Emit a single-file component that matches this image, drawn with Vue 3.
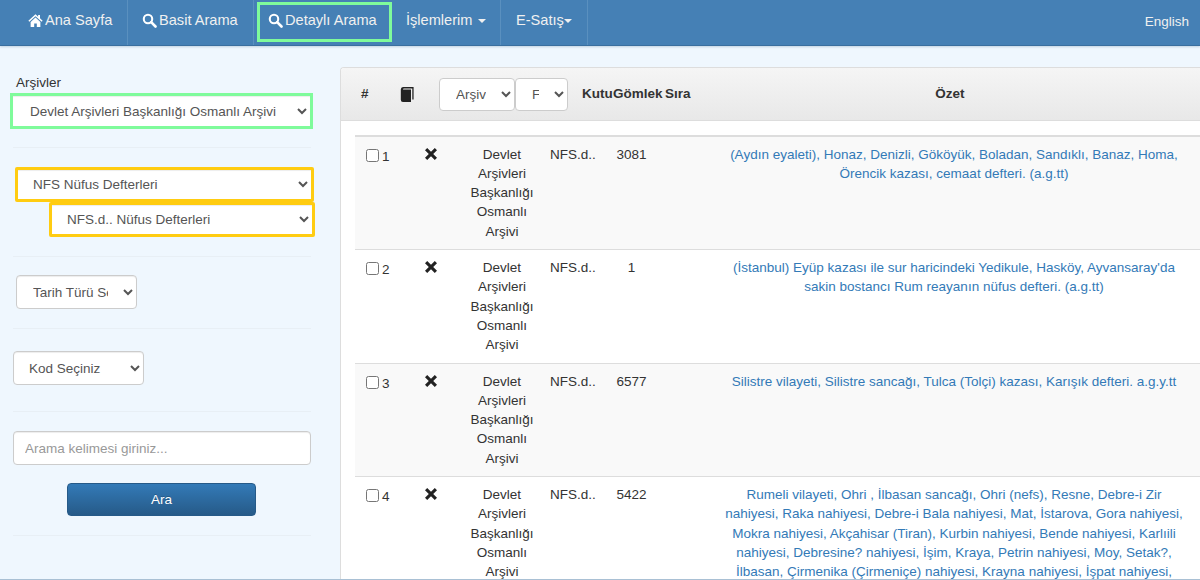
<script setup>
const navItems = [
  { label: 'Ana Sayfa', icon: 'home', cls: 'navHome' },
  { label: 'Basit Arama', icon: 'search', cls: 'navBasit' },
  { label: 'Detaylı Arama', icon: 'search', cls: 'navDetay' },
  { label: 'İşlemlerim', caret: true, cls: 'navIslem' },
  { label: 'E-Satış', caret: true, cls: 'navSatis' },
]

const arsiv = ['Devlet', 'Arşivleri', 'Başkanlığı', 'Osmanlı', 'Arşivi']

const rows = [
  {
    no: 1,
    kutu: '3081',
    ozet: '(Aydın eyaleti), Honaz, Denizli, Gököyük, Boladan, Sandıklı, Banaz, Homa, Örencik kazası, cemaat defteri. (a.g.tt)',
  },
  {
    no: 2,
    kutu: '1',
    ozet: "(İstanbul) Eyüp kazası ile sur haricindeki Yedikule, Hasköy, Ayvansaray'da sakin bostancı Rum reayanın nüfus defteri. (a.g.tt)",
  },
  {
    no: 3,
    kutu: '6577',
    ozet: 'Silistre vilayeti, Silistre sancağı, Tulca (Tolçi) kazası, Karışık defteri. a.g.y.tt',
  },
  {
    no: 4,
    kutu: '5422',
    ozet: 'Rumeli vilayeti, Ohri , İlbasan sancağı, Ohri (nefs), Resne, Debre-i Zir nahiyesi, Raka nahiyesi, Debre-i Bala nahiyesi, Mat, İstarova, Gora nahiyesi, Mokra nahiyesi, Akçahisar (Tiran), Kurbin nahiyesi, Bende nahiyesi, Karlıili nahiyesi, Debresine? nahiyesi, İşim, Kraya, Petrin nahiyesi, Moy, Setak?, İlbasan, Çirmenika (Çirmeniçe) nahiyesi, Krayna nahiyesi, İşpat nahiyesi,',
  },
]
</script>

<template>
  <div class="page">
    <nav class="navbar">
      <a v-for="item in navItems" :key="item.label" class="navItem" :class="item.cls">
        <svg v-if="item.icon === 'home'" class="navIcon" viewBox="0 0 16 16">
          <path d="M8 1.2 .4 8.2l1 1.1L8 3.4l6.6 5.9 1-1.1-2.8-2.6V2h-2v1.9L8 1.2zM2.8 9.6V15h3.8v-3.8h2.8V15h3.8V9.6L8 4.9 2.8 9.6z" fill="#fff" />
        </svg>
        <svg v-if="item.icon === 'search'" class="navIcon" viewBox="0 0 16 16">
          <circle cx="6.4" cy="6.4" r="4.5" fill="none" stroke="#fff" stroke-width="2.2" />
          <path d="M9.8 9.8 14.4 14.4" stroke="#fff" stroke-width="2.8" stroke-linecap="round" />
        </svg>
        <span>{{ item.label }}</span>
        <i v-if="item.caret" class="caret"></i>
      </a>
      <a class="english">English</a>
    </nav>

    <div class="main">
      <aside class="sidebar">
        <label class="arsivLabel">Arşivler</label>
        <select class="field green">
          <option>Devlet Arşivleri Başkanlığı Osmanlı Arşivi</option>
        </select>
        <hr class="rule ruleFirst" />
        <select class="field orange fonSelect">
          <option>NFS Nüfus Defterleri</option>
        </select>
        <select class="field orange subSelect">
          <option>NFS.d.. Nüfus Defterleri</option>
        </select>
        <hr class="rule ruleSecond" />
        <select class="field tarihSelect">
          <option>Tarih Türü Seçiniz</option>
        </select>
        <hr class="rule ruleThird" />
        <select class="field kodSelect">
          <option>Kod Seçiniz</option>
        </select>
        <hr class="rule ruleFourth" />
        <input class="field searchInput" placeholder="Arama kelimesi giriniz..." />
        <button class="araButton">Ara</button>
        <hr class="rule ruleLast" />
      </aside>

      <section class="panel">
        <header class="tableHead">
          <b class="hHash">#</b>
          <svg class="bookIcon" viewBox="0 0 14 15">
            <path d="M3 0H13.6v12.4h-1.3V1.4H3.6L2.8 2.4H11V15H3a2.2 2.2 0 0 1-2.2-2.2V2.4A2.4 2.4 0 0 1 3 0z" fill="#222" />
          </svg>
          <select class="headSelect arsivSelect"><option>Arşiv</option></select>
          <select class="headSelect fSelect"><option>F</option></select>
          <b class="hKutu">Kutu</b>
          <b class="hGomlek">Gömlek</b>
          <b class="hSira">Sıra</b>
          <b class="hOzet">Özet</b>
        </header>

        <div class="rows">
          <div v-for="row in rows" :key="row.no" class="row">
            <div class="cellNo">
              <input type="checkbox" class="check" />
              <span class="rowNo">{{ row.no }}</span>
            </div>
            <div class="cellIcon">
              <svg class="removeIcon" viewBox="0 0 14 14">
                <path d="M3.2 1 7 4.8 10.8 1 13 3.2 9.2 7l3.8 3.8-2.2 2.2L7 9.2 3.2 13 1 10.8 4.8 7 1 3.2z" fill="#222" />
              </svg>
            </div>
            <div class="cellArsiv">
              <div v-for="word in arsiv" :key="word">{{ word }}</div>
            </div>
            <div class="cellKod">NFS.d..</div>
            <div class="cellKutu">{{ row.kutu }}</div>
            <div></div>
            <a class="cellOzet">{{ row.ozet }}</a>
          </div>
        </div>
      </section>
    </div>
  </div>
</template>

<style>
html,
body {
  margin: 0;
  overflow: hidden;
}
</style>

<style scoped>
.page {
  width: 1200px;
  height: 580px;
  display: flex;
  flex-direction: column;
  overflow: hidden;
  box-sizing: border-box;
  border-bottom: 1px solid #a9c0d4;
  background: #eff7fe;
  font-family: "Liberation Sans", Arial, sans-serif;
  font-size: 13.5px;
  line-height: 19.3px;
  color: #333;
}

/* navbar */
.navbar {
  flex: none;
  height: 46px;
  box-sizing: border-box;
  display: flex;
  align-items: stretch;
  padding-left: 15px;
  background: #4580b5;
  border-bottom: 1px solid #3a6f9f;
  box-shadow: 0 1px 2px rgba(60, 100, 140, 0.25);
  color: #f0f0f0;
  font-size: 14.6px;
}

.navItem {
  display: flex;
  align-items: center;
  box-sizing: border-box;
  padding-bottom: 4px;
  border-right: 1px solid #5a90bf;
}

.navHome {
  width: 113px;
  padding-left: 13px;
}

.navBasit {
  width: 126px;
  padding-left: 14px;
}

.navDetay {
  width: 135px;
  height: 40px;
  margin: 2px 0 0 3px;
  padding-left: 8px;
  padding-bottom: 3px;
  border: 3px solid #7ffb9b;
}

.navIslem {
  width: 109px;
  padding-left: 14px;
}

.navSatis {
  width: 87px;
  padding-left: 15px;
}

.navIcon {
  width: 15px;
  height: 15px;
  margin-right: 2px;
}

.caret {
  width: 0;
  height: 0;
  margin-left: 6px;
  border-top: 4px solid #f0f0f0;
  border-left: 4px solid transparent;
  border-right: 4px solid transparent;
}

.navSatis .caret {
  margin-left: 0;
}

.english {
  margin-left: auto;
  padding: 12px 11px 0 0;
  font-size: 13.5px;
}

/* layout */
.main {
  flex: 1;
  min-height: 0;
  display: flex;
}

.sidebar {
  flex: none;
  width: 340px;
  box-sizing: border-box;
  padding: 27px 29px 0 13px;
  display: flex;
  flex-direction: column;
  align-items: flex-start;
}

.arsivLabel {
  margin: 0 0 1px 3px;
  font-weight: 400;
}

.rule {
  align-self: stretch;
  margin: 0;
  border: 0;
  border-top: 1px solid #e8eff5;
}

.ruleFirst {
  margin-top: 18px;
}

.ruleSecond {
  margin-top: 19px;
}

.ruleThird {
  margin-top: 19px;
}

.ruleFourth {
  margin-top: 26px;
}

.ruleLast {
  margin-top: 19px;
}

.field {
  box-sizing: border-box;
  height: 34px;
  padding: 6px 12px;
  border: 1px solid #ccc;
  border-radius: 4px;
  background: #fff;
  color: #555;
  font: inherit;
  box-shadow: inset 0 1px 1px rgba(0, 0, 0, 0.075);
}

.green {
  width: 303px;
  height: 36px;
  margin-left: -3px;
  padding-left: 13px;
  border: 3px solid #7ffb9b;
  border-radius: 0;
}

.orange {
  height: 35px;
  border: 3px solid #ffcc11;
  border-radius: 2px;
  padding-left: 11px;
}

.fonSelect {
  width: 299px;
  margin: 19px 0 0 2px;
}

.subSelect {
  width: 266px;
  margin: 0 0 0 36px;
}

.tarihSelect {
  width: 121px;
  margin: 18px 0 0 3px;
}

.kodSelect {
  width: 131px;
  margin-top: 22px;
  padding-left: 11px;
}

.searchInput {
  width: 298px;
  margin-top: 19px;
  padding-left: 11px;
}

.searchInput::placeholder {
  color: #999;
}

.araButton {
  width: 189px;
  height: 33px;
  margin: 18px 0 0 54px;
  border: 1px solid #265a88;
  border-radius: 4px;
  background: linear-gradient(to bottom, #337ab7, #265a88);
  color: #fff;
  font: inherit;
  text-shadow: 0 -1px 0 rgba(0, 0, 0, 0.2);
}

/* table panel */
.panel {
  flex: 1;
  min-width: 0;
  margin-top: 21px;
  background: #fff;
  border: 1px solid #ddd;
  border-right: 0;
  border-bottom: 0;
  border-top-left-radius: 4px;
  overflow: hidden;
}

.tableHead {
  height: 53px;
  box-sizing: border-box;
  display: flex;
  align-items: center;
  padding-left: 20px;
  background: linear-gradient(to bottom, #f5f5f5, #e8e8e8);
  border-bottom: 1px solid #ddd;
  color: #333;
  font-size: 13.5px;
}

.tableHead > * {
  flex: none;
}

.hHash {
  width: 39px;
}

.bookIcon {
  width: 14px;
  height: 15px;
}

.headSelect {
  box-sizing: border-box;
  height: 33px;
  padding: 6px 12px;
  border: 1px solid #ccc;
  border-radius: 4px;
  background: #fff;
  color: #555;
  font: inherit;
}

.arsivSelect {
  width: 76px;
  margin-left: 25px;
}

.fSelect {
  width: 53px;
}

.hKutu {
  margin-left: 14px;
  width: 31px;
}

.hGomlek {
  width: 52px;
}

.hSira {
  width: 40px;
}

.hOzet {
  width: 496px;
  text-align: center;
  margin-left: -3px;
}

.rows {
  margin: 14px 0 0 14px;
  border-top: 2px solid #ddd;
}

.row {
  display: grid;
  grid-template-columns: 58px 37px 100px 54px 55px 55px 480px;
  padding: 7.6px 0 8.4px;
  border-bottom: 1px solid #ddd;
}

.row:nth-child(odd) {
  background: #f9f9f9;
}

.row:last-child {
  border-bottom: 0;
}

.cellNo {
  display: flex;
  align-items: flex-start;
  padding-left: 11px;
}

.check {
  width: 13px;
  height: 13px;
  margin: 4px 3px 0 0;
}

.rowNo {
  padding-top: 2px;
}

.cellIcon {
  padding: 2px 0 0 11px;
}

.removeIcon {
  width: 14px;
  height: 14px;
  display: block;
}

.cellArsiv {
  padding-left: 4px;
  text-align: center;
}

.cellKutu {
  text-align: center;
}

.cellOzet {
  padding: 0 10px;
  text-align: center;
  color: #337ab7;
}
</style>
